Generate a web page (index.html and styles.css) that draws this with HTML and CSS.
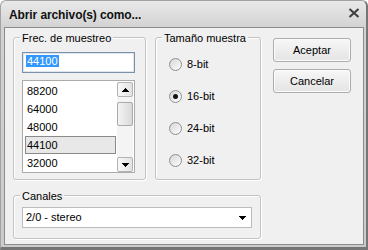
FILE: index.html
```html
<!DOCTYPE html>
<html lang="es">

<head>
    <meta charset="UTF-8">
    <title>Abrir archivo(s) como...</title>
    <link rel="stylesheet" href="styles.css">
</head>

<body>

    <div class="window">
        <div class="titlebar">
            <span class="title">Abrir archivo(s) como...</span>
            <svg class="close" width="12" height="10" viewBox="0 0 12 10">
                <path d="M1.5 1 L10.5 9 M10.5 1 L1.5 9" stroke="#3d3d3d" stroke-width="2" fill="none"/>
            </svg>
        </div>

        <div class="client">
            <div class="panes">
                <div class="row">
                    <div class="group group-rate">
                        <div class="group-title">Frec. de muestreo</div>
                        <div class="textbox"><span class="sel">44100</span></div>
                        <div class="listbox">
                            <ul class="items">
                                <li>88200</li>
                                <li>64000</li>
                                <li>48000</li>
                                <li class="current">44100</li>
                                <li>32000</li>
                            </ul>
                            <div class="scrollbar">
                                <div class="sb-btn">
                                    <svg width="7" height="4" viewBox="0 0 7 4" shape-rendering="crispEdges">
                                        <path d="M3 0h1v1h1v1h1v1h1v1H0V3h1V2h1V1h1z" fill="#000"/>
                                    </svg>
                                </div>
                                <div class="sb-thumb"></div>
                                <div class="sb-btn down">
                                    <svg width="7" height="4" viewBox="0 0 7 4" shape-rendering="crispEdges">
                                        <path d="M0 0h7v1H6v1H5v1H4v1H3V3H2V2H1V1H0z" fill="#000"/>
                                    </svg>
                                </div>
                            </div>
                        </div>
                    </div>

                    <div class="group group-size">
                        <div class="group-title">Tamaño muestra</div>
                        <div class="radios">
                            <div class="radio"><span class="dot"></span>8-bit</div>
                            <div class="radio"><span class="dot on"></span>16-bit</div>
                            <div class="radio"><span class="dot"></span>24-bit</div>
                            <div class="radio"><span class="dot"></span>32-bit</div>
                        </div>
                    </div>
                </div>

                <div class="group group-channels">
                    <div class="group-title">Canales</div>
                    <div class="combo">
                        <span>2/0 - stereo</span>
                        <svg width="7" height="4" viewBox="0 0 7 4" shape-rendering="crispEdges">
                            <path d="M0 0h7v1H6v1H5v1H4v1H3V3H2V2H1V1H0z" fill="#000"/>
                        </svg>
                    </div>
                </div>
            </div>

            <div class="actions">
                <button>Aceptar</button>
                <button>Cancelar</button>
            </div>
        </div>
    </div>

</body>

</html>
```

FILE: styles.css
```css
* {
    box-sizing: border-box;
}

body {
    margin: 0;
    font-family: "Liberation Sans", Arial, sans-serif;
    font-size: 11px;
    color: #000;
    background: #fff;
}

.window {
    width: 368px;
    height: 250px;
    display: flex;
    flex-direction: column;
    border: 1px solid #a3a3a3;
    border-right: 2px solid #767676;
    border-bottom: 3px solid #767676;
    border-radius: 6px 6px 0 0;
    background: linear-gradient(#e9e9e9, #d2d2d2 27px, #cbcbcb);
}

.titlebar {
    height: 26px;
    display: flex;
    justify-content: space-between;
    align-items: flex-start;
    padding: 0 6px 0 8px;
}

.title {
    margin-top: 8px;
    font-size: 12px;
    font-weight: bold;
    line-height: 13px;
    letter-spacing: -0.1px;
    color: #111;
}

.close {
    margin-top: 7px;
}

.client {
    flex: 1;
    display: flex;
    gap: 12px;
    margin: 0 2px 2px 3px;
    padding: 9px 0 0 8px;
    border: 1px solid #8c8c8c;
    background: #f0f0f0;
}

.panes {
    display: flex;
    flex-direction: column;
    gap: 15px;
}

.row {
    display: flex;
    gap: 9px;
}

/* group boxes */
.group {
    border: 1px solid #c3c3c3;
    border-radius: 3px;
    box-shadow: inset 1px 1px 0 #fff, 1px 1px 0 #fff;
}

.group-title {
    display: table;
    margin: -6px 0 0 6px;
    padding: 0 2px;
    line-height: 13px;
    background: #f0f0f0;
}

.group-rate {
    width: 133px;
    height: 143px;
}

.group-size {
    width: 106px;
    height: 143px;
}

.group-channels {
    width: 248px;
    height: 44px;
}

/* sample rate */
.textbox {
    width: 113px;
    height: 21px;
    margin: 7px 0 0 8px;
    padding: 2px 3px;
    line-height: 12px;
    border: 1px solid #7d90aa;
    box-shadow: inset 0 0 0 1px #dfe5ec;
    background: #fff;
}

.sel {
    display: inline-block;
    padding: 0 1px;
    background: #3399ff;
    color: #fff;
}

.listbox {
    width: 113px;
    height: 93px;
    margin: 7px 0 0 8px;
    padding: 1px 1px 0 2px;
    display: flex;
    gap: 1px;
    border: 1px solid #ababab;
    background: #fff;
}

.items {
    list-style: none;
    margin: 0;
    padding: 0;
    width: 91px;
}

.items li {
    height: 18px;
    padding-left: 1px;
    line-height: 16px;
    border: 1px solid transparent;
}

.items li.current {
    background: #e8e8e8;
    border-color: #8a8a8a;
}

.scrollbar {
    width: 16px;
    display: flex;
    flex-direction: column;
    background: #f4f4f4;
}

.sb-btn {
    height: 15px;
    display: flex;
    align-items: center;
    justify-content: center;
    border: 1px solid #b3b3b3;
    border-radius: 2px;
    background: linear-gradient(to right, #f8f8f8, #e2e2e2);
}

.sb-btn.down {
    margin-top: auto;
}

.sb-thumb {
    height: 24px;
    margin-top: 5px;
    border: 1px solid #a9a9a9;
    border-radius: 2px;
    background: linear-gradient(to right, #f4f4f4, #d9d9d9);
}

/* sample size */
.radios {
    display: flex;
    flex-direction: column;
    margin-top: 3px;
    padding-left: 13px;
}

.radio {
    height: 32px;
    display: flex;
    align-items: center;
    gap: 5px;
    line-height: 13px;
}

.dot {
    width: 13px;
    height: 13px;
    display: flex;
    align-items: center;
    justify-content: center;
    border: 1px solid #8f8f8f;
    border-radius: 50%;
    background: linear-gradient(135deg, #d6d6d6, #fdfdfd);
}

.dot.on::after {
    content: "";
    width: 5px;
    height: 5px;
    border-radius: 50%;
    background: #111;
}

/* channels */
.combo {
    width: 230px;
    height: 21px;
    margin: 4px 0 0 8px;
    padding: 0 5px 0 3px;
    display: flex;
    align-items: center;
    justify-content: space-between;
    line-height: 13px;
    border: 1px solid #bcbcbc;
    background: #fff;
}

/* buttons */
.actions {
    display: flex;
    flex-direction: column;
    gap: 7px;
    padding-top: 1px;
}

button {
    width: 78px;
    height: 24px;
    padding: 0;
    font: inherit;
    color: #000;
    border: 1px solid #acacac;
    border-radius: 3px;
    background: linear-gradient(#f7f7f7, #e4e4e4);
    box-shadow: inset 0 0 0 1px #fcfcfc;
}
```
